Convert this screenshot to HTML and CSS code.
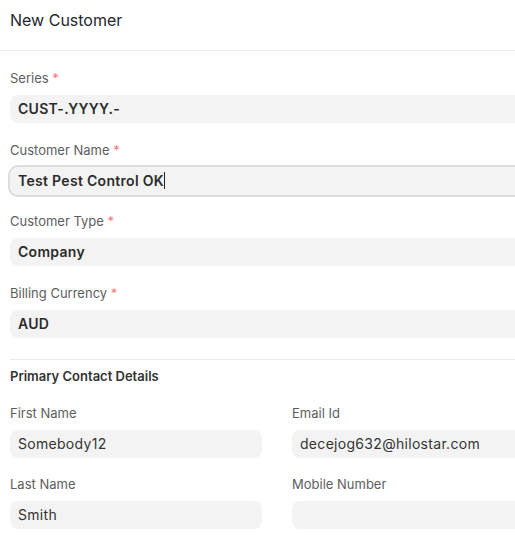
FILE: index.html
```html
<!DOCTYPE html>
<html lang="en">
<head>
  <meta charset="UTF-8">
  <title>New Customer</title>
  <link rel="stylesheet" href="styles.css">
</head>
<body>

  <!-- Cabeçalho do diálogo -->
  <div class="modal-header">New Customer</div>

  <div class="modal-body">
    <div class="field">
      <label class="label">Series <span class="req">*</span></label>
      <div class="control bold">CUST-.YYYY.-</div>
    </div>

    <div class="field">
      <label class="label">Customer Name <span class="req">*</span></label>
      <div class="control bold focused">Test Pest Control OK<span class="caret"></span></div>
    </div>

    <div class="field">
      <label class="label">Customer Type <span class="req">*</span></label>
      <div class="control bold">Company</div>
    </div>

    <div class="field">
      <label class="label">Billing Currency <span class="req">*</span></label>
      <div class="control bold">AUD</div>
    </div>

    <!-- Seção de contato -->
    <div class="section">
      <div class="section-title">Primary Contact Details</div>
      <div class="columns">
        <div class="column">
          <div class="field">
            <label class="label">First Name</label>
            <div class="control">Somebody12</div>
          </div>
          <div class="field">
            <label class="label">Last Name</label>
            <div class="control">Smith</div>
          </div>
        </div>
        <div class="column">
          <div class="field">
            <label class="label">Email Id</label>
            <div class="control">decejog632@hilostar.com</div>
          </div>
          <div class="field">
            <label class="label">Mobile Number</label>
            <div class="control"></div>
          </div>
        </div>
      </div>
    </div>
  </div>

</body>
</html>
```

FILE: styles.css
```css
/* Estilização geral */
body {
  font-family: 'Inter', sans-serif;
  background-color: #fff;
  margin: 0;
  color: #1f272e;
  overflow: hidden;
}

/* Cabeçalho */
.modal-header {
  height: 51px;
  box-sizing: border-box;
  padding: 10px 10px 0 10px;
  font-size: 16px;
  line-height: 20px;
  color: #1f272e;
  border-bottom: 1px solid #ebebeb;
  width: 560px;
}

.modal-body {
  width: 534px;
  padding: 19px 10px 0 10px;
}

/* Campos */
.field {
  margin-bottom: 18.5px;
}

.label {
  display: block;
  font-size: 13px;
  line-height: 16px;
  color: #5e5e5e;
  margin-bottom: 9px;
}

.req {
  color: #f07d7d;
}

.control {
  height: 28px;
  box-sizing: border-box;
  background-color: #f3f3f3;
  border-radius: 8px;
  padding: 0 8px;
  font-size: 14px;
  letter-spacing: 0.3px;
  line-height: 28px;
  color: #333;
}

.control.bold {
  font-weight: 600;
  color: #2b2b2b;
}

.control.focused {
  box-shadow: 0 0 0 2px #dcdcdc;
}

.caret {
  display: inline-block;
  width: 1px;
  height: 17px;
  background-color: #222;
  vertical-align: -3px;
}

/* Seção */
.section {
  border-top: 1px solid #ebebeb;
  margin-top: 21px;
  padding-top: 8px;
}

.section-title {
  font-size: 13px;
  font-weight: 600;
  line-height: 16px;
  color: #333;
  margin-bottom: 21px;
}

.columns {
  display: grid;
  grid-template-columns: 1fr 1fr;
  column-gap: 30px;
}
```
